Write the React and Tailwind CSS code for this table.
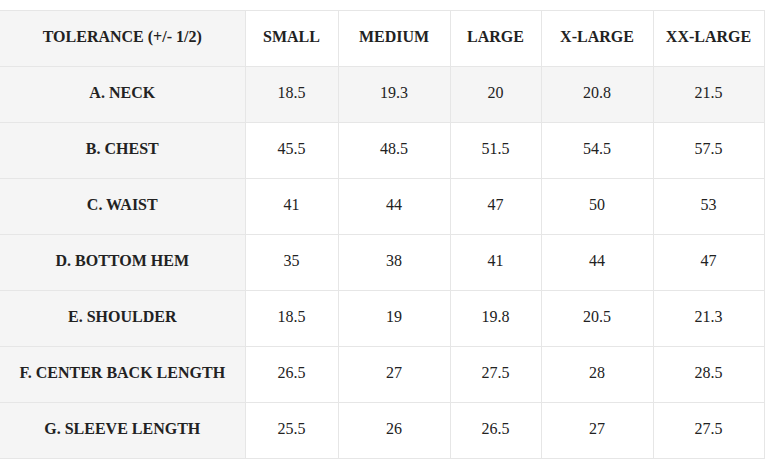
import React from 'react';

const sizes = ['SMALL', 'MEDIUM', 'LARGE', 'X-LARGE', 'XX-LARGE'];

const rows = [
  ['A. NECK', '18.5', '19.3', '20', '20.8', '21.5'],
  ['B. CHEST', '45.5', '48.5', '51.5', '54.5', '57.5'],
  ['C. WAIST', '41', '44', '47', '50', '53'],
  ['D. BOTTOM HEM', '35', '38', '41', '44', '47'],
  ['E. SHOULDER', '18.5', '19', '19.8', '20.5', '21.3'],
  ['F. CENTER BACK LENGTH', '26.5', '27', '27.5', '28', '28.5'],
  ['G. SLEEVE LENGTH', '25.5', '26', '26.5', '27', '27.5'],
];

const widths = ['w-[245px]', 'w-[93px]', 'w-[112px]', 'w-[91px]', 'w-[112px]', 'w-[111px]'];

const App = () => {
  return (
    <div className="bg-white w-[772px] h-[462px] pt-[10px] text-[#222]">
      <table className="w-[764px] border-collapse table-fixed text-center text-[16px] font-[Liberation_Serif] text-[#222]">
        <thead>
          <tr className="h-[56px]">
            <th className={`${widths[0]} bg-[#f5f5f5] border-y border-r border-[#e6e6e6] font-bold pb-[3px]`}>
              TOLERANCE (+/- 1/2)
            </th>
            {sizes.map((s, i) => (
              <th key={s} className={`${widths[i + 1]} border border-[#e6e6e6] font-bold pb-[3px]`}>
                {s}
              </th>
            ))}
          </tr>
        </thead>
        <tbody>
          {rows.map((r, ri) => (
            <tr key={r[0]} className={`h-[56px] ${ri === 0 ? 'bg-[#f5f5f5]' : ''}`}>
              <td className="bg-[#f5f5f5] border-y border-r border-[#e6e6e6] font-bold pb-[3px]">{r[0]}</td>
              {r.slice(1).map((v, i) => (
                <td key={i} className="border border-[#e6e6e6] pb-[3px]">
                  {v}
                </td>
              ))}
            </tr>
          ))}
        </tbody>
      </table>
    </div>
  );
};

export default App;
